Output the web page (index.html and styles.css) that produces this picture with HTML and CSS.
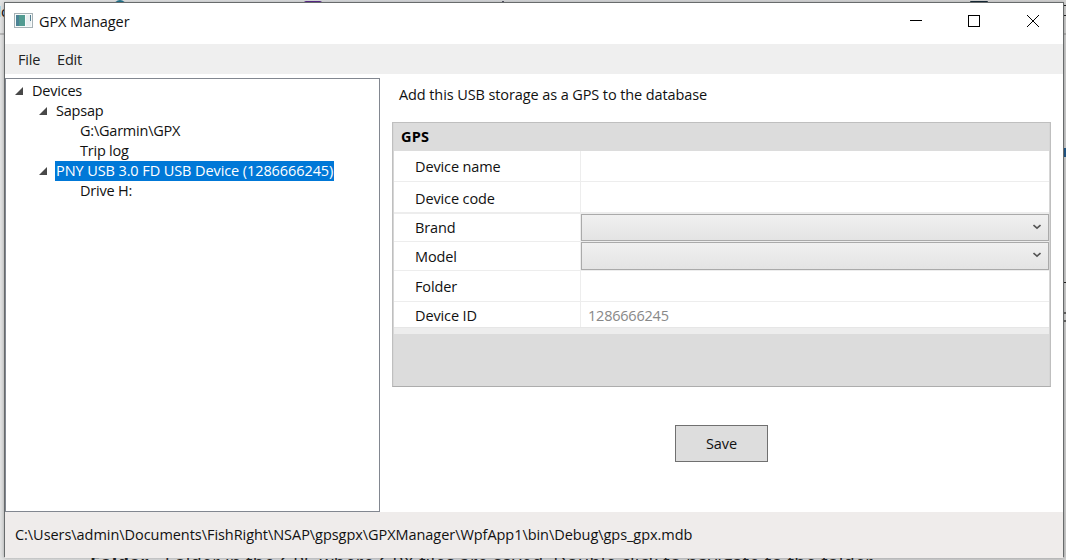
FILE: index.html
```html
<!DOCTYPE html>
<html lang="en">
<head>
<meta charset="utf-8">
<title>GPX Manager</title>
<link rel="stylesheet" href="styles.css">
</head>
<body>
<div class="desktop">
  <div class="behind-left">do</div>
  <div class="behind-rule"></div>
  <svg class="behind-top" width="1066" height="4"><circle cx="120" cy="6" r="6" fill="#23758f"/><rect x="304" y="1" width="18" height="3" rx="2" fill="#5b2b8c"/><rect x="502" y="1" width="2" height="2" fill="#556"/><rect x="970" y="1" width="18" height="3" rx="1" fill="#172b38"/></svg>
  <svg class="behind-right" width="2" height="560"><path d="M0 5.5h2M0 15.5h2M0 282.5h2" stroke="#222"/><path d="M0 34h2" stroke="#b0b0b0" stroke-width="2"/><path d="M0 148h2v9H0z" fill="#245b8c"/><path d="M0 313h2M0 321h2" stroke="#666" stroke-width="2"/></svg>
  <div class="behind-text"><b>Folder</b> - Folder in the GPS where GPX files are saved. Double click to navigate to the folder</div>
  <main class="window">
    <header class="titlebar">
      <svg class="app-icon" width="19" height="15" viewBox="0 0 19 15"><rect x=".5" y=".5" width="18" height="14" fill="#f7fafa" stroke="#a6b1b5"/><rect x="2" y="2" width="9" height="11" fill="#519b91"/><path d="M2 2h3v11H2z" fill="#4c8395"/><path d="M12 2h5v11h-5z" fill="#e9eff1"/><path d="M16.5 2v6" stroke="#557f91"/></svg>
      <h1 class="title">GPX Manager</h1>
      <svg class="controls" width="134" height="14" viewBox="0 0 134 14" fill="none" stroke="#000"><path d="M0 6.5h12"/><rect x="58.5" y="1.5" width="11" height="11"/><path d="M117 1l12 12M129 1l-12 12"/></svg>
    </header>
    <nav class="menubar"><span class="file">File</span><span class="edit">Edit</span></nav>
    <div class="body">
      <div class="tree">
        <div class="node"><svg class="arrow" width="8" height="8"><path d="M8 0v8H0z"/></svg><span class="t-devices">Devices</span></div>
        <div class="node level1"><svg class="arrow" width="8" height="8"><path d="M8 0v8H0z"/></svg><span class="t-sapsap">Sapsap</span></div>
        <div class="node leaf"><span class="t-garmin">G:\Garmin\GPX</span></div>
        <div class="node leaf"><span class="t-trip">Trip log</span></div>
        <div class="node level1"><svg class="arrow" width="8" height="8"><path d="M8 0v8H0z"/></svg><span class="selected">PNY USB 3.0 FD USB Device (1286666245)</span></div>
        <div class="node leaf"><span class="t-drive">Drive H:</span></div>
      </div>
      <section class="content">
        <p class="caption">Add this USB storage as a GPS to the database</p>
        <div class="grid">
          <div class="grid-head">GPS</div>
          <div class="row r-name"><div class="key">Device name</div><div class="value"></div></div>
          <div class="row r-code"><div class="key">Device code</div><div class="value"></div></div>
          <div class="row r-brand"><div class="key">Brand</div><div class="value"><div class="combo"><svg width="8" height="6"><path d="M.5 1L4 4.2 7.5 1"/></svg></div></div></div>
          <div class="row r-model"><div class="key">Model</div><div class="value"><div class="combo"><svg width="8" height="6"><path d="M.5 1L4 4.2 7.5 1"/></svg></div></div></div>
          <div class="row r-folder"><div class="key">Folder</div><div class="value"></div></div>
          <div class="row r-id"><div class="key">Device ID</div><div class="value readonly">1286666245</div></div>
          <div class="splitter"></div>
          <div class="description"></div>
        </div>
        <button class="save">Save</button>
      </section>
    </div>
    <footer class="statusbar"><span>C:\Users\admin\Documents\FishRight\NSAP\gpsgpx\GPXManager\WpfApp1\bin\Debug\gps_gpx.mdb</span></footer>
  </main>
</div>
</body>
</html>
```
FILE: styles.css
```css
* { box-sizing: border-box; }
body { margin: 0; background: #dadada; font: 14.5px/20px "Open Sans", "Noto Sans", sans-serif; color: #111; letter-spacing: -0.22px; }
.desktop { position: relative; width: 1066px; height: 560px; overflow: hidden; padding: 2px 0 0 4px; background: linear-gradient(90deg, #e3e4e4 0, #d4d6d9 40%, #d2d2d2 100%); }
.window { position: relative; width: 1060px; height: 555px; border: 1px solid #686b6c; background: #fff; box-shadow: 0 1px 4px rgba(0,0,0,.3); display: flex; flex-direction: column; }
.behind-left { position: absolute; left: -8px; top: 1px; font-size: 15px; }
.behind-rule { position: absolute; left: 0; top: 33px; width: 5px; height: 2px; background: #bbb; }
.behind-top { position: absolute; left: 0; top: 0; }
.behind-right { position: absolute; right: 0; top: 0; }
.behind-text { position: absolute; left: 90px; top: 552px; white-space: nowrap; font-size: 18.3px; letter-spacing: 0.2px; color: #222; }
.titlebar { height: 41px; display: flex; align-items: flex-start; padding: 10px 19px 0 9px; flex: none; }
.app-icon { margin-right: 6px; }
.title { margin: -1px 0 0; font-size: 14.5px; line-height: 20px; font-weight: 400; letter-spacing: -0.08px; }
.controls { margin-left: auto; margin-top: 1px; }
.menubar { height: 30px; background: #efefef; padding: 6px 13px; display: flex; gap: 17px; flex: none; color: #222; }
.body { height: 438px; display: flex; flex: none; }
.tree { width: 375px; height: 434px; margin-top: 4px; border: 1px solid #828790; padding: 2px 0 0 9px; }
.node { height: 20px; display: flex; align-items: flex-start; }
.node span { height: 20px; white-space: nowrap; padding: 0 1px; }
.arrow { margin: 6px 9px 0 0; fill: #484848; }
.node .t-devices { padding-left: 0; }
.level1 { padding-left: 24px; }
.level1 .arrow { margin-right: 8px; }
.leaf { padding-left: 64px; }
.node .selected { background: #0078d7; color: #fff; width: 279px; letter-spacing: -0.09px; }
.content { padding: 0 12px 0 12px; flex: 1; display: flex; flex-direction: column; }
.caption { margin: 11px 0 17px 7px; height: 20px; white-space: nowrap; letter-spacing: -0.1px; }
.grid { width: 659px; height: 265px; border: 1px solid #bfbfbf; border-bottom-color: #adadad; box-shadow: inset 1px 0 #d6d6d6, inset -1px 0 #d6d6d6; padding: 0 1px; flex: none; }
.grid-head { height: 28px; padding: 4px 7px; background: #dcdcdc; font-weight: 700; color: #000; letter-spacing: 0.2px; }
.row { display: flex; border-bottom: 1px solid #ededed; }
.key { width: 187px; padding-left: 21px; border-right: 1px solid #ededed; display: flex; align-items: center; letter-spacing: -0.12px; }
.value { flex: 1; }
.r-name { height: 31px; }
.r-code { height: 32px; border-bottom-width: 2px; }
.r-brand { height: 28px; }
.r-model { height: 29px; }
.r-folder { height: 31px; }
.r-id { height: 25px; border: 0; }
.r-name .key, .r-model .key, .r-folder .key { padding-top: 2px; }
.r-code .key { padding-top: 3px; }
.r-id .key { padding-top: 3px; }
.combo { height: 27px; border: 1px solid #aaa; background: linear-gradient(#f0f0f0, #e4e4e4); display: flex; justify-content: flex-end; padding: 9px 7px 0 0; }
.r-model .combo { height: 28px; }
.combo svg { fill: none; stroke: #555; stroke-width: 1.6; }
.readonly { color: #888; padding: 4px 7px; }
.splitter { height: 7px; background: #ededed; border-top: 1px solid #e6e6e6; }
.description { height: 52px; background: #dcdcdc; }
.save { width: 93px; height: 37px; margin: 38px 0 0 283px; border: 1px solid #707070; background: #ddd; font: inherit; color: inherit; letter-spacing: -0.1px; padding: 0; }
.statusbar { flex: 1; padding: 13px 10px; background: #efeceb; white-space: nowrap; letter-spacing: -0.05px; }
```
